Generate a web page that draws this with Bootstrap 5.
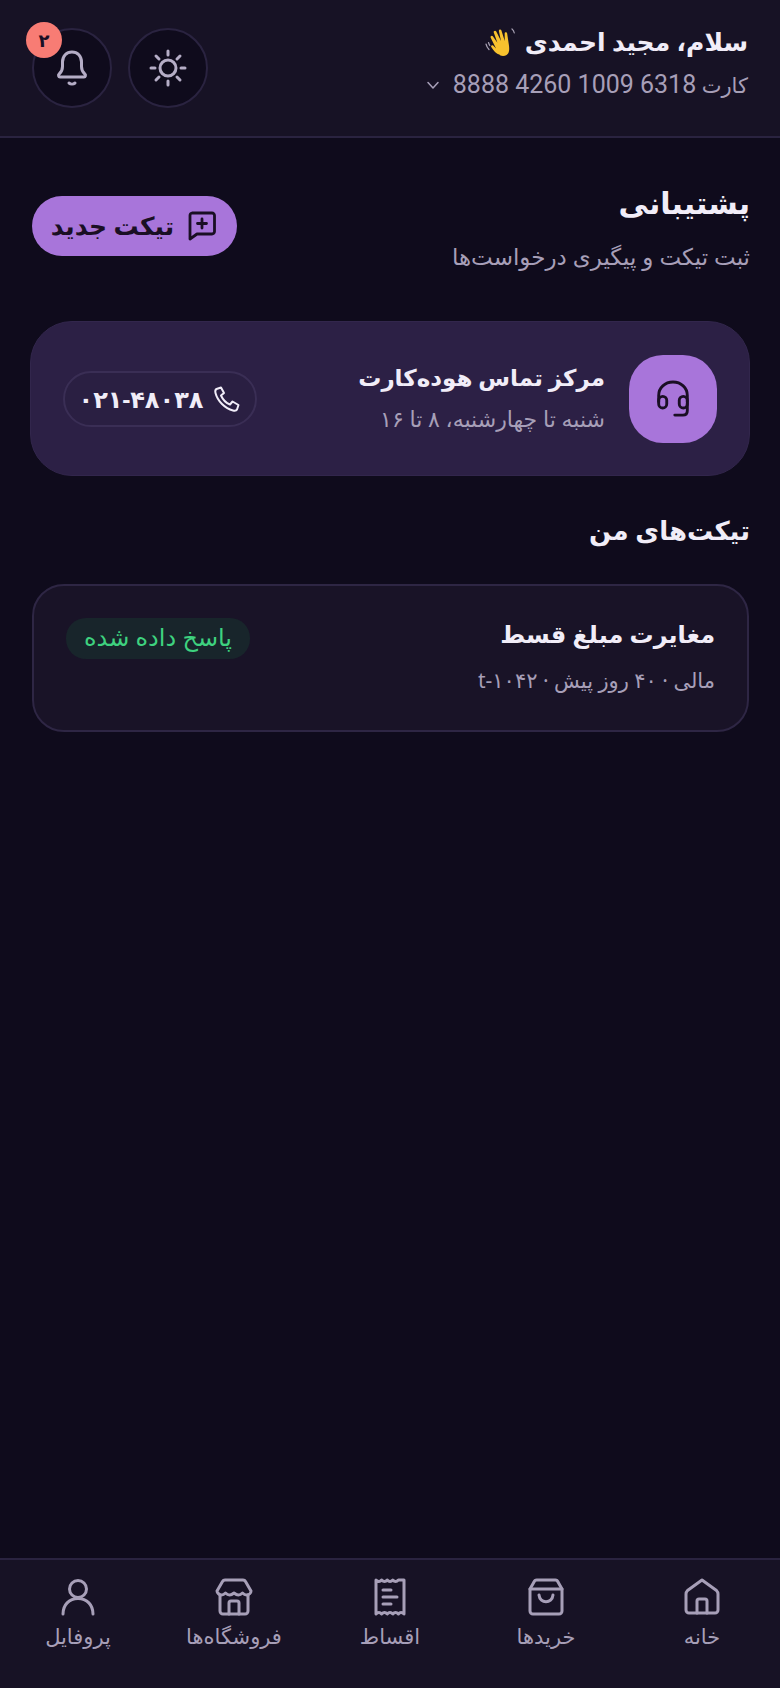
<!DOCTYPE html>
<html lang="fa" dir="rtl">

<head>
    <meta charset="UTF-8" />
    <meta name="viewport" content="width=device-width, initial-scale=1" />
    <title>پشتیبانی</title>
    <link href="https://cdn.jsdelivr.net/npm/bootstrap@5.3.3/dist/css/bootstrap.min.css" rel="stylesheet" />
    <style>
        body {
            background-color: #0f0b1c;
            color: #f1edf8;
            font-family: "Noto Sans", "DejaVu Sans", sans-serif;
        }

        .app-shell {
            height: 1688px;
        }

        .top-bar {
            height: 138px;
            padding: 0 32px;
            background-color: #171225;
            border-bottom: 2px solid #2a2340;
        }

        .hello-block {
            margin-bottom: 13px;
        }

        .hello-line {
            font-size: 25px;
            font-weight: 700;
            line-height: 36px;
        }

        .card-line {
            margin-top: 11px;
            font-size: 21px;
            line-height: 30px;
            color: #a79fb8;
        }

        .card-line .card-digits {
            font-family: Roboto, sans-serif;
            font-size: 25px;
        }

        .round-btn {
            width: 80px;
            height: 80px;
            color: #b5adc6;
            background-color: #0f0b1c;
            border: 2px solid #2a2340;
            border-radius: 50%;
        }

        .bell-count {
            top: -8px;
            left: -8px;
            width: 36px;
            height: 36px;
            font-size: 18px;
            font-weight: 700;
            color: #1a0f24;
            background-color: #f87c74;
        }

        .page-body {
            padding: 43px 30px 0;
        }

        .page-title {
            font-size: 30px;
            font-weight: 700;
            line-height: 44px;
            color: #f1edf8;
        }

        .page-sub {
            margin-top: 16px;
            font-size: 23px;
            line-height: 30px;
            color: #a79fb8;
        }

        .new-ticket {
            width: 205px;
            height: 60px;
            margin: 15px 0 0 2px;
            gap: 12px;
            font-size: 25px;
            font-weight: 700;
            color: #1a0f24;
            background-color: #a875da;
            border-radius: 30px;
        }

        .contact-box {
            height: 155px;
            margin-top: 50px;
            padding: 0 32px;
            background-color: #2c2045;
            border: 1px solid #32264c;
            border-radius: 42px;
        }

        .contact-tile {
            width: 88px;
            height: 88px;
            color: #1a0f24;
            background-color: #a875da;
            border-radius: 34px;
        }

        .contact-text {
            margin-bottom: 6px;
        }

        .contact-name {
            font-size: 23px;
            font-weight: 700;
            line-height: 36px;
        }

        .contact-hours {
            margin-top: 8px;
            font-size: 22px;
            line-height: 30px;
            color: #a79fb8;
        }

        .phone-pill {
            width: 194px;
            height: 56px;
            gap: 10px;
            font-size: 24px;
            font-weight: 700;
            color: #f1edf8;
            background-color: #2a1f42;
            border: 2px solid #3a2e55;
            border-radius: 28px;
        }

        .list-title {
            margin: 35px 0 0;
            font-size: 26px;
            font-weight: 700;
            line-height: 38px;
            color: #f1edf8;
        }

        .ticket-box {
            height: 148px;
            margin: 35px 1px 0 2px;
            padding: 30px 32px 0;
            background-color: #191327;
            border: 2px solid #2e2644;
            border-radius: 32px;
        }

        .ticket-name {
            font-size: 24px;
            font-weight: 700;
            line-height: 36px;
        }

        .ticket-meta {
            margin-top: 13px;
            font-size: 21px;
            line-height: 30px;
            color: #a79fb8;
        }

        .ticket-state {
            width: 184px;
            height: 41px;
            margin-top: 2px;
            padding-bottom: 3px;
            font-size: 24px;
            color: #3ed27f;
            background-color: #18252b;
            border-radius: 20px;
        }

        .tab-bar {
            height: 130px;
            background-color: #171225;
            border-top: 2px solid #2a2340;
        }

        .tab-item {
            width: 156px;
            padding-top: 18px;
            font-size: 21px;
            color: #a79fb8;
        }

        .tab-label {
            margin-top: 6px;
            line-height: 28px;
        }
    </style>
</head>

<body>

    <div class="app-shell d-flex flex-column">

        <!-- Header -->
        <header class="top-bar d-flex justify-content-between align-items-center flex-shrink-0">
            <div class="hello-block">
                <div class="hello-line d-flex align-items-center gap-2">
                    <span>سلام، مجید احمدی</span>
                    <svg width="32" height="32" viewBox="0 0 32 32" aria-hidden="true">
                        <g transform="rotate(-16 16 16)">
                            <path fill="#f8c22e" d="M11 29c-3-2-5-6-6-10-.4-1.500 1.500-2 2.200-.8l2 3.600L7 10c-.3-1.600 2-2.200 2.600-.6l2.400 7.400-.6-11c-.1-1.700 2.300-2 2.700-.3l1.900 10.500.7-10c.1-1.700 2.500-1.600 2.600.1l.3 10.900 2-7.300c.4-1.500 2.600-1 2.400.6l-1.500 11.700c-.7 5-2 8-5 9-2 .6-4.500 0-6.500-1.500z" />
                        </g>
                        <path fill="none" stroke="#a9a2b5" stroke-width="1.200" stroke-linecap="round" d="M1 19c.5 2 1.500 4 3 5.500M3.500 17.500c.3 1 .7 2 1.300 3M27 4c1.200 1 2 2.400 2.300 4" />
                    </svg>
                </div>
                <div class="card-line d-flex align-items-center gap-2">
                    <span>کارت <span class="card-digits">6318 1009 4260 8888</span></span>
                    <svg class="me-1" width="16" height="16" viewBox="0 0 16 16" fill="none" stroke="currentColor" stroke-width="1.500" stroke-linecap="round" stroke-linejoin="round" aria-hidden="true">
                        <path d="M3 5.500l5 5.500 5-5.500" />
                    </svg>
                </div>
            </div>
            <div class="d-flex gap-3">
                <button class="round-btn btn p-0 d-flex align-items-center justify-content-center" type="button" aria-label="تم">
                    <svg width="38" height="38" viewBox="0 0 38 38" fill="none" stroke="currentColor" stroke-width="3" stroke-linecap="round" aria-hidden="true">
                        <circle cx="19" cy="19" r="8" />
                        <path d="M19 2v4M19 32v4M2 19h4M32 19h4M7 7l3 3M28 28l3 3M7 31l3-3M28 10l3-3" />
                    </svg>
                </button>
                <button class="round-btn btn p-0 d-flex align-items-center justify-content-center position-relative" type="button" aria-label="اعلان‌ها">
                    <svg width="40" height="40" viewBox="0 0 40 40" fill="none" stroke="currentColor" stroke-width="3" stroke-linecap="round" stroke-linejoin="round" aria-hidden="true">
                        <path d="M8 29h24c1.500 0 2-2 .8-3-2-1.700-3.300-4-3.300-7.500V14C29.500 8 25.500 4 20 4S10.500 8 10.500 14v4.500c0 3.500-1.300 5.800-3.300 7.500-1.200 1-.7 3 .8 3z" />
                        <path d="M17 35c1.600 1.400 4.400 1.400 6 0" />
                    </svg>
                    <span class="bell-count position-absolute rounded-circle d-flex align-items-center justify-content-center">۲</span>
                </button>
            </div>
        </header>

        <!-- Main -->
        <main class="page-body flex-grow-1">
            <div class="d-flex justify-content-between align-items-start">
                <div>
                    <div class="page-title">پشتیبانی</div>
                    <div class="page-sub">ثبت تیکت و پیگیری درخواست‌ها</div>
                </div>
                <a href="#" class="new-ticket btn p-0 d-flex align-items-center justify-content-center">
                    <svg width="32" height="32" viewBox="0 0 32 32" fill="none" stroke="currentColor" stroke-width="2.800" stroke-linecap="round" stroke-linejoin="round" aria-hidden="true">
                        <path d="M6 3h20a2.500 2.500 0 0 1 2.500 2.500v16a2.500 2.500 0 0 1-2.500 2.500H11l-7 5V5.500A2.500 2.500 0 0 1 6 3z" />
                        <path d="M16 9v9M11.500 13.500h9" />
                    </svg>
                    <span>تیکت جدید</span>
                </a>
            </div>

            <section class="contact-box d-flex justify-content-between align-items-center">
                <div class="d-flex align-items-center gap-4">
                    <div class="contact-tile d-flex align-items-center justify-content-center">
                        <svg width="34" height="38" viewBox="0 0 38 42" fill="none" stroke="currentColor" stroke-width="3.200" stroke-linecap="round" stroke-linejoin="round" aria-hidden="true">
                            <path d="M3 24v-7C3 8.500 10 2 19 2s16 6.500 16 15v7" />
                            <rect x="3" y="18" width="9" height="13" rx="4.500" />
                            <rect x="26" y="18" width="9" height="13" rx="4.500" />
                            <path d="M35 26v8c0 3-2 5-5 5h-9" />
                        </svg>
                    </div>
                    <div class="contact-text">
                        <div class="contact-name">مرکز تماس هوده‌کارت</div>
                        <div class="contact-hours">شنبه تا چهارشنبه، ۸ تا ۱۶</div>
                    </div>
                </div>
                <a href="#" class="phone-pill btn p-0 d-flex align-items-center justify-content-center">
                    <svg width="28" height="28" viewBox="0 0 28 28" fill="none" stroke="currentColor" stroke-width="2" stroke-linejoin="round" aria-hidden="true">
                        <path d="M8 2.500L3.500 4C2.500 4.500 2 6 2.500 8c2 8 9.500 15.500 17.500 17.500 2 .5 3.500 0 4-1l1.500-4.500-6-3.500-2.500 3c-4-1.500-7-4.500-9-9l3-2.500z" />
                    </svg>
                    <span dir="ltr">۰۲۱-۴۸۰۳۸</span>
                </a>
            </section>

            <h2 class="list-title">تیکت‌های من</h2>

            <section class="ticket-box d-flex justify-content-between align-items-start">
                <div>
                    <div class="ticket-name">مغایرت مبلغ قسط</div>
                    <div class="ticket-meta">مالی · ۴۰ روز پیش · <span dir="ltr">t-۱۰۴۲</span></div>
                </div>
                <span class="ticket-state d-flex align-items-center justify-content-center">پاسخ داده شده</span>
            </section>
        </main>

        <!-- Bottom tabs -->
        <nav class="tab-bar d-flex justify-content-between flex-shrink-0">
            <div class="tab-item d-flex flex-column align-items-center">
                <svg width="38" height="38" viewBox="0 0 38 38" fill="none" stroke="currentColor" stroke-width="3" stroke-linecap="round" stroke-linejoin="round" aria-hidden="true">
                    <path d="M6 35a3 3 0 0 1-3-3V16c0-1.500.6-2.600 1.500-3.500L19 2l14.500 10.500c.9.900 1.500 2 1.500 3.500v16a3 3 0 0 1-3 3z" />
                    <path d="M14 35V23a2 2 0 0 1 2-2h6a2 2 0 0 1 2 2v12" />
                </svg>
                <span class="tab-label">خانه</span>
            </div>
            <div class="tab-item d-flex flex-column align-items-center">
                <svg width="38" height="38" viewBox="0 0 38 38" fill="none" stroke="currentColor" stroke-width="3" stroke-linecap="round" stroke-linejoin="round" aria-hidden="true">
                    <path d="M10 2h18a3 3 0 0 1 3 2l4 7v22a3 3 0 0 1-3 3H6a3 3 0 0 1-3-3V11l4-7a3 3 0 0 1 3-2z" />
                    <path d="M3 11h32M12 17c1 9 13 9 14 0" />
                </svg>
                <span class="tab-label">خریدها</span>
            </div>
            <div class="tab-item d-flex flex-column align-items-center">
                <svg width="38" height="38" viewBox="0 0 38 38" fill="none" stroke="currentColor" stroke-width="3" stroke-linecap="round" stroke-linejoin="round" aria-hidden="true">
                    <path d="M5 2c2 2 4 2 5.600 0 2 2 4 2 5.600 0 1.800 2 3.800 2 5.600 0 1.800 2 3.800 2 5.600 0H33v34c-2-2-4-2-5.600 0-1.800-2-3.800-2-5.600 0-1.800-2-3.800-2-5.600 0-1.600-2-3.600-2-5.600 0-1.600-2-3.600-2-5.600 0z" />
                    <path d="M12 12h8M12 19h14M12 26h8" />
                </svg>
                <span class="tab-label">اقساط</span>
            </div>
            <div class="tab-item d-flex flex-column align-items-center">
                <svg width="38" height="38" viewBox="0 0 38 38" fill="none" stroke="currentColor" stroke-width="3" stroke-linecap="round" stroke-linejoin="round" aria-hidden="true">
                    <path d="M10 2h18a3 3 0 0 1 2.500 1.500L36 13c0 2-2 4-4.500 4-2 0-3-1-4-2-1 1-2.800 2-4.200 2s-3-1-4.300-2c-1.300 1-2.800 2-4.300 2s-3.200-1-4.200-2c-1 1-2 2-4 2S2 15 2 13l5.500-9.500A3 3 0 0 1 10 2z" />
                    <path d="M5 17v16a3 3 0 0 0 3 3h22a3 3 0 0 0 3-3V17" />
                    <path d="M14 36V25a2 2 0 0 1 2-2h6a2 2 0 0 1 2 2v11" />
                </svg>
                <span class="tab-label">فروشگاه‌ها</span>
            </div>
            <div class="tab-item d-flex flex-column align-items-center">
                <svg width="38" height="38" viewBox="0 0 38 38" fill="none" stroke="currentColor" stroke-width="3" stroke-linecap="round" aria-hidden="true">
                    <circle cx="19" cy="11" r="8.500" />
                    <path d="M4 36c0-9 6-15.500 15-15.500S34 27 34 36" />
                </svg>
                <span class="tab-label">پروفایل</span>
            </div>
        </nav>

    </div>

    <script src="https://cdn.jsdelivr.net/npm/bootstrap@5.3.3/dist/js/bootstrap.bundle.min.js"></script>
</body>

</html>
